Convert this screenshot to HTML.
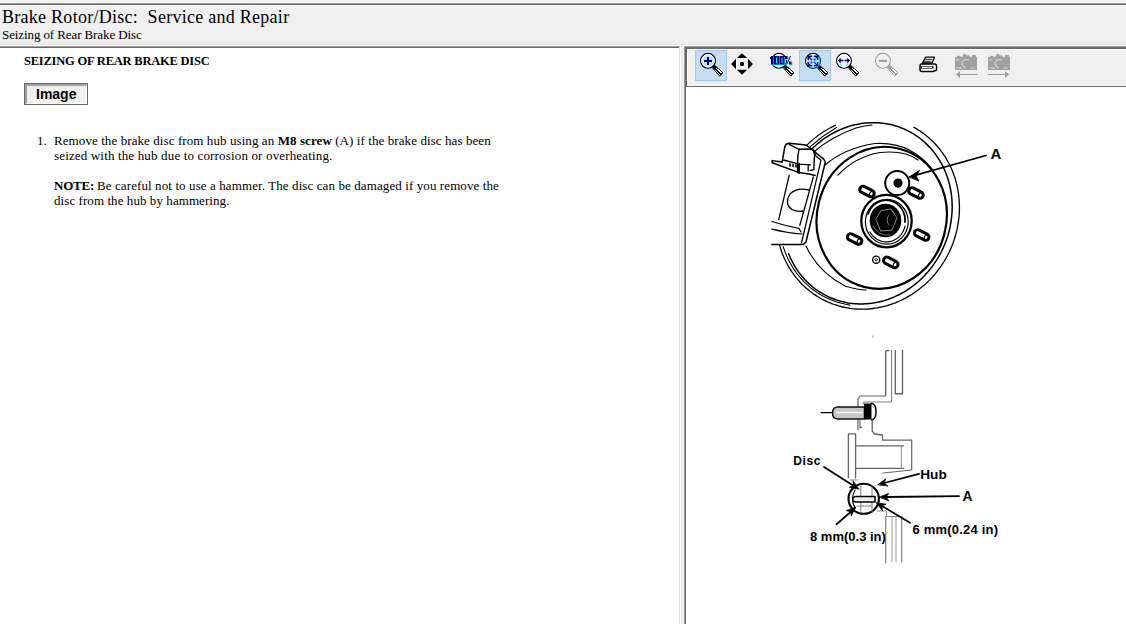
<!DOCTYPE html>
<html><head><meta charset="utf-8">
<style>
html,body{margin:0;padding:0;width:1126px;height:624px;overflow:hidden;background:#f0f0f0;}
.abs{position:absolute;}
.serif{font-family:"Liberation Serif",serif;color:#000;}
.sans{font-family:"Liberation Sans",sans-serif;color:#000;}
#title{left:2px;top:6.5px;font-size:18px;line-height:20px;white-space:nowrap;letter-spacing:0.27px;}
#sub{left:2px;top:27px;font-size:13px;line-height:15px;white-space:nowrap;letter-spacing:-0.1px;}
#h1{left:24px;top:54px;letter-spacing:-0.22px;font-size:12.5px;font-weight:bold;line-height:15px;white-space:nowrap;}
#btn{left:24px;top:83px;width:62px;height:20px;border:1px solid #696969;background:#f0f0f0;}
#btn .in{position:absolute;left:0;top:0;width:59px;height:17px;border-top:2px solid #a0a0a0;border-left:2px solid #a0a0a0;border-right:1px solid #fff;border-bottom:1px solid #fff;box-sizing:content-box;}
#btntxt{left:36px;top:87px;font-size:14px;font-weight:bold;line-height:15px;}
.ln{font-size:13px;line-height:15px;white-space:nowrap;}
</style></head><body>
<!-- header frame -->
<div class="abs" style="left:0;top:2px;width:1126px;height:1px;background:#f8f8f8"></div>
<div class="abs" style="left:0;top:3px;width:1126px;height:1px;background:#a0a0a0"></div>
<div class="abs" style="left:0;top:4px;width:1126px;height:1px;background:#696969"></div>
<div class="abs" style="left:0;top:5px;width:1126px;height:1px;background:#f8f8f8"></div>
<div class="abs" style="left:0;top:44px;width:1126px;height:1px;background:#e3e3e3"></div>
<div class="abs" style="left:0;top:45px;width:1126px;height:1px;background:#fff"></div>
<div id="title" class="abs serif">Brake Rotor/Disc:&nbsp; Service and Repair</div>
<div id="sub" class="abs serif">Seizing of Rear Brake Disc</div>

<!-- left pane -->
<div class="abs" style="left:0;top:46px;width:680px;height:1px;background:#a0a0a0"></div>
<div class="abs" style="left:0;top:47px;width:679px;height:1px;background:#696969"></div>
<div class="abs" style="left:680px;top:46px;width:1px;height:578px;background:#fff"></div>
<div class="abs" style="left:679px;top:47px;width:1px;height:577px;background:#e3e3e3"></div>
<div class="abs" style="left:0;top:48px;width:679px;height:576px;background:#fff"></div>

<!-- right pane -->
<div class="abs" style="left:684px;top:46px;width:442px;height:1px;background:#a0a0a0"></div>
<div class="abs" style="left:684px;top:46px;width:1px;height:578px;background:#a0a0a0"></div>
<div class="abs" style="left:685px;top:47px;width:441px;height:1px;background:#696969"></div>
<div class="abs" style="left:685px;top:47px;width:1px;height:577px;background:#696969"></div>
<div class="abs" style="left:686px;top:48px;width:440px;height:576px;background:#fff"></div>
<!-- toolbar -->
<div class="abs" style="left:686px;top:48px;width:440px;height:39px;background:#f0f0f0"></div>
<div class="abs" style="left:686px;top:48px;width:440px;height:1px;background:#696969"></div>
<div class="abs" style="left:686px;top:48px;width:1px;height:39px;background:#696969"></div>
<div class="abs" style="left:687px;top:49px;width:439px;height:1px;background:#fff"></div>
<div class="abs" style="left:687px;top:49px;width:1px;height:36px;background:#fff"></div>
<div class="abs" style="left:687px;top:85px;width:439px;height:1px;background:#f8f8f8"></div>
<div class="abs" style="left:686px;top:86px;width:440px;height:1px;background:#696969"></div>
<!-- hot buttons -->
<div class="abs" style="left:695px;top:50px;width:30px;height:29px;border:1px solid #99ccf5;background:#c5ddf2"></div>
<div class="abs" style="left:799px;top:50px;width:30px;height:29px;border:1px solid #99ccf5;background:#c5ddf2"></div>

<!-- left content -->
<div id="h1" class="abs serif">SEIZING OF REAR BRAKE DISC</div>
<div id="btn" class="abs"><div class="in"></div></div>
<div id="btntxt" class="abs sans">Image</div>
<div class="abs serif ln" style="left:37px;top:133px">1.</div>
<div class="abs serif ln" style="left:54px;top:133px;letter-spacing:0.085px">Remove the brake disc from hub using an <b>M8 screw</b> (A) if the brake disc has been</div>
<div class="abs serif ln" style="left:54px;top:148px;letter-spacing:0.155px">seized with the hub due to corrosion or overheating.</div>
<div class="abs serif ln" style="left:54px;top:178px;letter-spacing:-0.2px"><b>NOTE:</b></div>
<div class="abs serif ln" id="l3b" style="left:97px;top:178px;letter-spacing:0.1px">Be careful not to use a hammer. The disc can be damaged if you remove the</div>
<div class="abs serif ln" style="left:54px;top:193px;letter-spacing:0.07px">disc from the hub by hammering.</div>

<!--DIAGRAM-->
<svg class="abs" style="left:0;top:0" width="1126" height="624" viewBox="0 0 1126 624" fill="none" stroke="#000" stroke-linecap="round" stroke-linejoin="round">
<path d="M913.8 127.3 L915.8 128.4 L917.7 129.6 L919.7 130.8 L921.5 132.1 L923.4 133.4 L925.2 134.8 L927.0 136.2 L928.7 137.7 L930.4 139.2 L932.1 140.8 L933.7 142.4 L935.3 144.0 L936.8 145.7 L938.3 147.5 L939.7 149.2 L941.1 151.1 L942.5 152.9 L943.8 154.8 L945.1 156.7 L946.3 158.7 L947.4 160.7 L948.5 162.8 L949.6 164.8 L950.6 166.9 L951.6 169.1 L952.5 171.2 L953.3 173.4 L954.1 175.6 L954.9 177.8 L955.6 180.1 L956.2 182.4 L956.8 184.7 L957.3 187.0 L957.8 189.3 L958.2 191.6 L958.5 194.0 L958.8 196.4 L959.0 198.7 L959.2 201.1 L959.3 203.5 L959.4 205.9 L959.4 208.3 L959.4 210.7 L959.3 213.1 L959.1 215.6 L958.9 218.0 L958.6 220.4 L958.2 222.8 L957.8 225.2 L957.4 227.6 L956.9 229.9 L956.3 232.3 L955.7 234.7 L955.0 237.0 L954.3 239.3 L953.5 241.6 L952.7 243.9 L951.8 246.2 L950.8 248.5 L949.8 250.7 L948.8 252.9 L947.7 255.1 L946.5 257.2 L945.3 259.4 L944.1 261.5 L942.8 263.5 L941.4 265.6 L940.0 267.6 L938.6 269.5 L937.1 271.5 L935.6 273.4 L934.0 275.2 L932.4 277.0 L930.7 278.8 L929.0 280.6 L927.3 282.2 L925.5 283.9 L923.7 285.5 L921.9 287.1 L920.0 288.6 L918.1 290.0 L916.2 291.5 L914.2 292.8 L912.2 294.2 L910.2 295.4 L908.1 296.6 L906.1 297.8 L904.0 298.9 L901.8 300.0 L899.7 301.0 L897.5 301.9 L895.3 302.8 L893.1 303.6 L890.9 304.4 L888.7 305.1 L886.4 305.8 L884.2 306.4 L881.9 306.9 L879.6 307.4 L877.3 307.9 L875.0 308.2 L872.8 308.5 L870.5 308.8 L868.2 309.0 L865.8 309.1 L863.5 309.2 L861.3 309.2 L859.0 309.1 L856.7 309.0 L854.4 308.8 L852.1 308.6 L849.9 308.3 L847.6 307.9 L845.4 307.5 L843.1 307.0 L840.9 306.5 L838.7 305.9 L836.6 305.2 L834.4 304.5 L832.3 303.8 L830.2 302.9 L828.1 302.1 L826.0 301.1 L824.0 300.1 L822.0 299.1 L820.0 298.0 L818.0 296.8 L816.1 295.6 L814.2 294.4 L812.4 293.0 L810.6 291.7 L808.8 290.3 L807.0 288.8 L805.3 287.3 L803.7 285.8 L802.0 284.2 L800.4 282.5 L798.9 280.8 L797.4 279.1 L795.9 277.3 L794.5 275.5 L793.2 273.7 L791.9 271.8 L790.6 269.8 L789.4 267.9 L788.2 265.9 L787.1 263.8 L786.0 261.8 L785.0 259.7 L784.0 257.6 L783.1 255.4 L782.2 253.2 L781.4 251.0 L780.7 248.8 L780.0 246.6 L779.3 244.3 L778.7 242.0 L778.2 239.7 L777.7 237.4 L777.3 235.0" stroke-width="1.3" />
<path d="M807.4 144.6 L809.2 142.9 L811.0 141.2 L812.9 139.6 L814.8 138.1 L816.7 136.6 L818.7 135.1 L820.7 133.7 L822.7 132.3 L824.8 131.0 L826.9 129.8 L829.0 128.6 L831.1 127.4 L833.3 126.4 L835.5 125.3" stroke-width="1.2" />
<path d="M810 146.8 Q822 136 836.5 127.5" stroke-width="1.1" />
<path d="M796.9 168.0 L798.1 166.0 L799.4 164.1 L800.7 162.2 L802.0 160.3 L803.4 158.5 L804.8 156.7 L806.3 154.9 L807.8 153.2 L809.4 151.5 L810.9 149.9 L812.6 148.3 L814.2 146.7 L815.9 145.2 L817.6 143.7 L819.4 142.3 L821.1 140.9 L822.9 139.5 L824.8 138.2 L826.6 137.0 L828.5 135.8 L830.4 134.6 L832.4 133.5 L834.3 132.5 L836.3 131.5 L838.3 130.5 L840.3 129.6 L842.3 128.8 L844.4 128.0 L846.5 127.2 L848.5 126.5 L850.6 125.9 L852.7 125.3 L854.8 124.8 L856.9 124.4 L859.1 123.9 L861.2 123.6 L863.3 123.3 L865.4 123.1 L867.6 122.9 L869.7 122.7 L871.8 122.7 L874.0 122.7 L876.1 122.7 L878.2 122.8 L880.3 123.0 L882.4 123.2 L884.5 123.5 L886.6 123.8 L888.7 124.2 L890.7 124.6 L892.8 125.1 L894.8 125.7 L896.8 126.3 L898.8 126.9 L900.8 127.7 L902.7 128.4 L904.6 129.3 L906.5 130.1 L908.4 131.1 L910.3 132.1 L912.1 133.1 L913.9 134.2 L915.7 135.3 L917.4 136.5 L919.1 137.7 L920.8 139.0 L922.4 140.3 L924.0 141.7 L925.6 143.1 L927.1 144.6 L928.6 146.1 L930.1 147.6 L931.5 149.2 L932.9 150.9 L934.2 152.5 L935.5 154.2 L936.7 156.0 L937.9 157.8 L939.1 159.6 L940.2 161.4 L941.3 163.3 L942.3 165.2 L943.3 167.2 L944.2 169.1 L945.1 171.1 L945.9 173.2 L946.7 175.2 L947.4 177.3 L948.1 179.4 L948.7 181.5 L949.3 183.6 L949.8 185.8 L950.3 188.0 L950.7 190.2 L951.1 192.4 L951.4 194.6 L951.7 196.8 L951.9 199.1 L952.0 201.3 L952.1 203.6 L952.2 205.8 L952.2 208.1 L952.1 210.4 L952.0 212.7 L951.8 214.9 L951.6 217.2 L951.3 219.5 L951.0 221.8 L950.6 224.0 L950.2 226.3 L949.7 228.5 L949.2 230.8 L948.6 233.0 L948.0 235.2 L947.3 237.4 L946.5 239.6 L945.7 241.8 L944.9 243.9 L944.0 246.0 L943.1 248.1 L942.1 250.2 L941.1 252.3 L940.0 254.3 L938.9 256.4 L937.7 258.3 L936.5 260.3 L935.2 262.2 L933.9 264.1 L932.6 266.0 L931.2 267.8 L929.8 269.6 L928.3 271.4 L926.8 273.1 L925.3 274.8 L923.7 276.5 L922.1 278.1 L920.4 279.7 L918.8 281.2 L917.1 282.7 L915.3 284.1 L913.5 285.5 L911.7 286.9 L909.9 288.2 L908.0 289.4 L906.2 290.6 L904.3 291.8 L902.3 292.9 L900.4 294.0 L898.4 295.0 L896.4 295.9 L894.4 296.9 L892.4 297.7 L890.3 298.5 L888.3 299.3 L886.2 300.0 L884.1 300.6 L882.0 301.2 L879.9 301.7 L877.8 302.2 L875.7 302.6 L873.5 303.0 L871.4 303.3 L869.3 303.5 L867.1 303.7 L865.0 303.8 L862.9 303.9 L860.8 303.9 L858.6 303.9 L856.5 303.8 L854.4 303.7 L852.3 303.4 L850.2 303.2 L848.1 302.9 L846.0 302.5 L844.0 302.0 L841.9 301.6 L839.9 301.0 L837.9 300.4 L835.9 299.8 L833.9 299.0 L832.0 298.3 L830.0 297.5 L828.1 296.6 L826.3 295.7 L824.4 294.7 L822.6 293.7 L820.8 292.6 L819.0 291.5 L817.3 290.3 L815.5 289.1 L813.9 287.8 L812.2 286.5 L810.6 285.1 L809.0 283.7 L807.5 282.2 L806.0 280.7 L804.5 279.2 L803.1 277.6 L801.7 276.0 L800.4 274.3 L799.1 272.6 L797.9 270.9 L796.6 269.1 L795.5 267.3 L794.4 265.5 L793.3 263.6 L792.3 261.7 L791.3 259.7 L790.3 257.8 L789.5 255.8 L788.6 253.7" stroke-width="1.5" />
<path d="M815 151 Q832 136.5 856 128 Q865 125.5 872 125" stroke-width="1.1" />
<path d="M783.2 246.6 L783.9 248.8 L784.7 250.9 L785.5 253.0 L786.4 255.2 L787.3 257.2 L788.2 259.3 L789.3 261.3 L790.3 263.3 L791.5 265.3 L792.6 267.2 L793.8 269.1 L795.1 270.9 L796.4 272.8 L797.8 274.5 L799.2 276.3 L800.6 278.0 L802.1 279.6 L803.6 281.3 L805.2 282.8 L806.8 284.4 L808.5 285.8 L810.2 287.3 L811.9 288.7 L813.6 290.0 L815.4 291.3 L817.3 292.6 L819.1 293.7 L821.0 294.9 L822.9 296.0 L824.9 297.0 L826.9 298.0 L828.9 298.9 L830.9 299.8 L833.0 300.6 L835.0 301.4 L837.1 302.1 L839.2 302.7 L841.4 303.3 L843.5 303.8 L845.7 304.3 L847.9 304.7 L850.0 305.1" stroke-width="1.1" />
<ellipse cx="881.7" cy="217.8" rx="71.3" ry="64.7" transform="rotate(-75.6 881.7 217.8)" stroke-width="2.2" />
<path d="M825 165 Q845 148 875 143.5 Q910 141 933 170" stroke-width="1.2" />
<path d="M838 175 Q855 157 880 152.5 Q905 150 918 160" stroke-width="1.2" />
<path d="M806 246 Q818 272 845 286 Q858 290 866 290" stroke-width="1.1" />
<path d="M772.2 160.6 L782.1 162 L784.9 146.5 Q786 143.5 789.2 143.3 L806.1 145.1 L813.1 150 L817.4 154.2 L823.7 159.2 Q825.5 161 825.1 163 L806 243 L803 244.6 L771.9 244.6 Z" fill="#fff" stroke="none"/>
<path d="M782.1 162 L784.9 146.5 Q786 143.5 789.2 143.3 L806.1 145.1 L813.1 150 L817.4 154.2 L823.7 159.2 Q825.5 161 825.1 163 L806 242 L803 244.6 L771.9 244.6" stroke-width="1.5" />
<path d="M813.1 150 L816 156.3 L821 160.2 L801.5 243" stroke-width="1.2" />
<path d="M789.2 144.3 L799 149.3 L811 149 Q814.5 150 814.5 155.6 L813.8 169.7 L810.3 170.4" stroke-width="1.4" />
<path d="M799 149.3 Q797.5 156 797.6 162.7 L797.6 172.6" stroke-width="1.4" />
<path d="M772.2 160.6 L772.2 162.7 L799 172.6 L808.9 174 L815.2 175.4" stroke-width="1.5" />
<path d="M772.2 160.6 L782.1 162" stroke-width="1.4" />
<path d="M783.5 160 L799 164.1 L810.3 164.8 L808.2 165.5 L808.2 171.1" stroke-width="1.3" />
<path d="M789 163 L799 165 L799 168 L789 166.5 Z" fill="#000" stroke="none" opacity="0.75"/>
<path d="M791.5 163.5 v3 M794.5 164 v3" stroke-width="0.8" stroke="#fff"/>
<path d="M799 164 L799 173" stroke-width="2.0" />
<path d="M789.2 175.4 L778.7 219.6" stroke-width="1.3" />
<path d="M813.3 177 L799.8 225.4" stroke-width="1.3" />
<path d="M809 190 Q797 187 790 194 Q784 204 792 209.5 Q797 212 803 211" stroke-width="1.3" />
<path d="M771.9 221.5 Q786 226 798.8 228.3 L801 232" stroke-width="1.2" />
<path d="M771.9 229.2 Q786 233 802 234" stroke-width="1.2" />
<ellipse cx="886.5" cy="221.1" rx="25.2" ry="26.2" stroke-width="2.3"/>
<ellipse cx="886.8" cy="221.8" rx="21.4" ry="22.4" stroke-width="1.2"/>
<path d="M868 214 A19 20 0 0 1 905 222" stroke-width="1.8"/>
<path d="M905 226 A19 20 0 0 1 870 232" stroke-width="1.2"/>
<ellipse cx="885.5" cy="220.5" rx="15.8" ry="16.8" fill="#000" stroke="none"/>
<path d="M876 219 L881 210.5 L891 209 L897 218 L892 230 L881 231 Z" stroke="#999" stroke-width="0.9"/><path d="M873 226 Q878 236 890 235" stroke="#777" stroke-width="0.9"/>
<path d="M889 215 Q885 220 889 225" stroke="#999" stroke-width="0.8"/>
<g transform="rotate(27 867 191.5)"><rect x="859.25" y="188.2" width="15.5" height="6.6" rx="3.3" fill="#fff" stroke-width="3"/><path d="M871.25 188.7 Q869.25 191.5 871.25 194.3" stroke-width="1.2"/></g>
<g transform="rotate(27 916 193)"><rect x="908.25" y="189.7" width="15.5" height="6.6" rx="3.3" fill="#fff" stroke-width="3"/><path d="M920.25 190.2 Q918.25 193 920.25 195.8" stroke-width="1.2"/></g>
<g transform="rotate(27 921.7 235)"><rect x="913.95" y="231.7" width="15.5" height="6.6" rx="3.3" fill="#fff" stroke-width="3"/><path d="M925.95 232.2 Q923.95 235 925.95 237.8" stroke-width="1.2"/></g>
<g transform="rotate(27 854.6 239)"><rect x="846.85" y="235.7" width="15.5" height="6.6" rx="3.3" fill="#fff" stroke-width="3"/><path d="M858.85 236.2 Q856.85 239 858.85 241.8" stroke-width="1.2"/></g>
<g transform="rotate(27 890.8 262.4)"><rect x="883.05" y="259.09999999999997" width="15.5" height="6.6" rx="3.3" fill="#fff" stroke-width="3"/><path d="M895.05 259.59999999999997 Q893.05 262.4 895.05 265.2" stroke-width="1.2"/></g>
<circle cx="876.2" cy="259.7" r="3.6" stroke-width="1.4"/>
<circle cx="876.2" cy="259.7" r="1.2" stroke-width="0.8"/>
<circle cx="897.2" cy="183.1" r="12" fill="#fff" stroke-width="2"/>
<circle cx="898" cy="183.1" r="4.6" fill="#000" stroke="none"/>
<path d="M986 155.5 L913 175.8" stroke-width="1.8" />
<path d="M909.3 176.8 L919.5 170.5 L916 175.8 L918.8 180.8 Z" fill="#000" stroke="#000" stroke-width="0.9"/>
<text x="990.6" y="158.6" font-family="Liberation Sans" font-weight="bold" font-size="15" fill="#000" stroke="none">A</text>
<path d="M873 336 v1.5" stroke="#999" stroke-width="1"/>
<path d="M885.7 393.7 L885.7 351 L889 350.4" stroke="#666" stroke-width="1.4" />
<path d="M891.6 350.5 L891.6 401" stroke="#808080" stroke-width="1.1" />
<path d="M895.3 350.5 L895.3 393.7 L902.5 393.7 L902.5 350.5" stroke="#666" stroke-width="1.4" />
<path d="M885.7 393.7 L885.7 396 L860 396 L858 399 L858 430" stroke="#666" stroke-width="1.2" />
<path d="M891.6 401 L891 402 L864 402 L863 404" stroke="#808080" stroke-width="1.1" />
<path d="M821 412.6 L833 412.6" stroke="#000" stroke-width="1.3"/>
<path d="M838 407 L864.5 407 L864.5 419 L838 419 Q832.5 419 832.5 413 Q832.5 407 838 407 Z" fill="#c8c8c8" stroke="#111" stroke-width="1.5"/>
<path d="M837 412.5 L862 412.5" stroke="#fff" stroke-width="1.5"/>
<rect x="864" y="403.5" width="8" height="16" fill="#000" stroke="none"/>
<path d="M871.5 403.5 Q876 404 876 411.5 Q876 419.5 871.5 420" fill="#fff" stroke="#000" stroke-width="1.5"/>
<path d="M860 420 L860 428 L862 427" stroke="#666" stroke-width="1.1" />
<path d="M872.2 420 L872.2 431 L874.5 434 L882.5 435 L882.5 440.2 L911.7 440.2" stroke="#666" stroke-width="1.3" />
<path d="M848.4 477.9 L848.4 433.8 L855.6 433.8 L855.6 477.9" stroke="#666" stroke-width="1.3" />
<path d="M855.6 445.8 L903.7 445.8 M855.6 468.3 L903.7 468.3" stroke="#666" stroke-width="1.3" />
<path d="M901.3 445.8 L901.3 468.3" stroke="#8a8a8a" stroke-width="1.0" />
<path d="M911.7 440.2 L911.7 470 L883 473" stroke="#666" stroke-width="1.2" />
<path d="M850 480 L858 480" stroke="#8a8a8a" stroke-width="1.0" />
<ellipse cx="863.7" cy="498.8" rx="15.2" ry="15" stroke="#000" stroke-width="2.1" fill="#fff"/>
<path d="M860.8 485 L860.8 513 M872 485 L872 512" stroke="#808080" stroke-width="1.0" />
<path d="M856 496.4 L875 496.4 L875 502 L856 502 Q852.8 502 852.8 499.2 Q852.8 496.4 856 496.4 Z" stroke="#000" stroke-width="1.5" fill="#eee"/>
<path d="M857 506 L872 506" stroke="#808080" stroke-width="1.0" />
<path d="M855 490 Q850 499 855 508" stroke="#000" stroke-width="1.2" />
<path d="M885.7 516.5 L885.7 563" stroke="#808080" stroke-width="1.2" />
<path d="M892 516.5 L892 562" stroke="#999" stroke-width="1.0" />
<path d="M896 516.5 L896 562" stroke="#999" stroke-width="1.0" />
<path d="M901.7 516.5 L901.7 562" stroke="#808080" stroke-width="1.2" />
<path d="M877 511 L886.5 511 L886.5 516.5 L901.7 516.5" stroke="#8a8a8a" stroke-width="1.0" />
<path d="M824.0 467.0 L853.5 485.7" stroke="#000" stroke-width="1.8"/><path d="M858.8 489.1 L849.3 487.3 L853.5 485.7 L853.1 481.2 Z" fill="#000" stroke="#000" stroke-width="0.8"/>
<path d="M919.0 473.8 L884.1 483.0" stroke="#000" stroke-width="1.8"/><path d="M878.0 484.6 L885.8 478.8 L884.1 483.0 L887.6 485.8 Z" fill="#000" stroke="#000" stroke-width="0.8"/>
<path d="M959.0 496.1 L886.0 497.0" stroke="#000" stroke-width="1.8"/><path d="M879.7 497.1 L888.7 493.4 L886.0 497.0 L888.7 500.6 Z" fill="#000" stroke="#000" stroke-width="0.8"/>
<path d="M836.4 524.4 L850.9 511.7" stroke="#000" stroke-width="1.8"/><path d="M855.6 507.5 L851.2 516.1 L850.9 511.7 L846.5 510.7 Z" fill="#000" stroke="#000" stroke-width="0.8"/>
<path d="M910.0 522.8 L881.9 505.9" stroke="#000" stroke-width="1.8"/><path d="M876.5 502.7 L886.1 504.2 L881.9 505.9 L882.4 510.4 Z" fill="#000" stroke="#000" stroke-width="0.8"/>
<text x="793.3" y="464.5" font-size="12" letter-spacing="0.6" font-family="Liberation Sans" font-weight="bold" fill="#000" stroke="none">Disc</text>
<text x="920.3" y="478.5" font-size="13.6" font-family="Liberation Sans" font-weight="bold" fill="#000" stroke="none">Hub</text>
<text x="962.6" y="500.6" font-size="13.8" font-family="Liberation Sans" font-weight="bold" fill="#000" stroke="none">A</text>
<text x="810" y="541.2" font-size="13" font-family="Liberation Sans" font-weight="bold" fill="#000" stroke="none">8 mm(0.3 in)</text>
<text x="912.5" y="533.6" font-size="13" letter-spacing="0.2" font-family="Liberation Sans" font-weight="bold" fill="#000" stroke="none">6 mm(0.24 in)</text>
<circle cx="708" cy="60.8" r="7.4" stroke="#000" stroke-width="1.2"/><circle cx="708" cy="60.8" r="6.3" stroke="#fff" stroke-width="1"/><path d="M712.2 67.0 L714.2 65.0 L723 72.8 L720 75.8 Z" fill="#000" stroke="#000" stroke-width="1" stroke-linejoin="miter"/><path d="M716.5 68.3 L721.5 72.8 M715 70.3 L719.5 74.3" stroke="#fff" stroke-width="1" shape-rendering="crispEdges"/>
<rect x="704" y="60" width="8" height="2" fill="#000080" stroke="none"/><rect x="707" y="57" width="2" height="8" fill="#000080" stroke="none"/>
<path d="M742 52 L754 64 L742 76 L730 64 Z" fill="#fff" stroke="none"/>
<path d="M742 53.2 L747.2 58 L736.8 58 Z M742 74.8 L747.2 69.8 L736.8 69.8 Z M731 64 L736 58.8 L736 69.2 Z M753 64 L748 58.8 L748 69.2 Z" fill="#000" stroke="none"/>
<rect x="737.2" y="59.2" width="9.6" height="9.6" fill="#f0f0f0" stroke="none"/>
<circle cx="742" cy="64" r="3.2" fill="#fff" stroke="none"/><circle cx="742" cy="64" r="2.2" fill="#000" stroke="none"/>
<circle cx="779" cy="60.8" r="7.4" stroke="#000" stroke-width="1.2"/><circle cx="779" cy="60.8" r="6.3" stroke="#fff" stroke-width="1"/><path d="M783.2 67.0 L785.2 65.0 L794 72.8 L791 75.8 Z" fill="#000" stroke="#000" stroke-width="1" stroke-linejoin="miter"/><path d="M787.5 68.3 L792.5 72.8 M786 70.3 L790.5 74.3" stroke="#fff" stroke-width="1" shape-rendering="crispEdges"/>
<g fill="#00ffff" stroke="none" transform="translate(1,1)"><rect x="771" y="56" width="2.5" height="8.5"/><rect x="770" y="57" width="1.5" height="2"/><rect x="774" y="56" width="5" height="8.5"/><rect x="779.5" y="56" width="5" height="8.5"/><rect x="785" y="56" width="2.5" height="3"/><rect x="789" y="61.5" width="2.5" height="3"/></g>
<g fill="#000080" stroke="none"><rect x="771" y="56" width="2.5" height="8.5"/><rect x="770" y="57" width="1.5" height="2"/><rect x="774" y="56" width="5" height="8.5"/><rect x="779.5" y="56" width="5" height="8.5"/><rect x="785" y="56" width="2.5" height="3"/><rect x="789" y="61.5" width="2.5" height="3"/><path d="M790 56 L791 56 L787 64.5 L786 64.5 Z"/></g>
<rect x="776" y="57.5" width="1" height="5.5" fill="#00ffff" stroke="none"/><rect x="781.5" y="57.5" width="1" height="5.5" fill="#00ffff" stroke="none"/>
<circle cx="813" cy="60.8" r="7.4" stroke="#000" stroke-width="1.2"/><circle cx="813" cy="60.8" r="6.3" stroke="#fff" stroke-width="1"/><path d="M817.2 67.0 L819.2 65.0 L828 72.8 L825 75.8 Z" fill="#000" stroke="#000" stroke-width="1" stroke-linejoin="miter"/><path d="M821.5 68.3 L826.5 72.8 M820 70.3 L824.5 74.3" stroke="#fff" stroke-width="1" shape-rendering="crispEdges"/>
<path d="M808.2 59.5 V56.2 H811.5 M814.5 56.2 H817.8 V59.5 M817.8 62.5 V65.8 H814.5 M811.5 65.8 H808.2 V62.5" stroke="#000080" stroke-width="1.5" stroke-linejoin="miter"/>
<path d="M809 57 L811.8 59.8 M817 57 L814.2 59.8 M809 65 L811.8 62.2 M817 65 L814.2 62.2" stroke="#000080" stroke-width="1.2"/>
<path d="M810 60.5 L812 62.2 M816 60.5 L814 62.2 M809.5 63.5 h1.2 M815.3 58.5 h1.2 M819 57 v9 M810 67 h8" stroke="#00e8ff" stroke-width="1"/>
<circle cx="844" cy="60.8" r="7.4" stroke="#000" stroke-width="1.2"/><circle cx="844" cy="60.8" r="6.3" stroke="#fff" stroke-width="1"/><path d="M848.2 67.0 L850.2 65.0 L859 72.8 L856 75.8 Z" fill="#000" stroke="#000" stroke-width="1" stroke-linejoin="miter"/><path d="M852.5 68.3 L857.5 72.8 M851 70.3 L855.5 74.3" stroke="#fff" stroke-width="1" shape-rendering="crispEdges"/>
<path d="M837.8 60.5 L840.8 57.8 L840.8 63.2 Z M850.2 60.5 L847.2 57.8 L847.2 63.2 Z" fill="#000080" stroke="none"/><path d="M840 60.5 h2.8 M845.2 60.5 h2.8" stroke="#000080" stroke-width="1.7"/>
<path d="M840.5 64 l1 1.5 M847.5 64 l-1 1.5" stroke="#00ffff" stroke-width="1"/>
<circle cx="883" cy="60.8" r="7.4" stroke="#a0a0a0" stroke-width="1.2"/><circle cx="883" cy="60.8" r="6.3" stroke="#f0f0f0" stroke-width="1"/><path d="M887.2 67.0 L889.2 65.0 L898 72.8 L895 75.8 Z" fill="#a0a0a0" stroke="#a0a0a0" stroke-width="1" stroke-linejoin="miter"/><path d="M891.5 68.3 L896.5 72.8 M890 70.3 L894.5 74.3" stroke="#fff" stroke-width="1" shape-rendering="crispEdges"/>
<rect x="879" y="59.8" width="8" height="2.2" fill="#a0a0a0" stroke="none"/>
<path d="M925.5 57.2 L934.5 57.2 L932 63 L922.5 63 Z" fill="#fff" stroke="#000" stroke-width="1.3"/>
<path d="M921 64 L934.5 64 Q936.5 64 936.5 66 L936.5 70 L933 71.5 L921.5 71.5 Q920 71.5 920 70 L920 66 Q920 64 921 64 Z" fill="#fff" stroke="#000" stroke-width="1.4"/>
<rect x="920.5" y="66.2" width="13" height="2.4" fill="#000" stroke="none"/><rect x="922" y="66.8" width="10" height="1.2" fill="#fff" stroke="none"/><rect x="927" y="66.8" width="3" height="1.2" fill="#e0d000" stroke="none"/>
<path d="M925.5 59.3 h6.5 M924.5 61.3 h6" stroke="#000" stroke-width="0.9"/>
<rect x="955" y="57" width="22" height="13" fill="#a0a0a0" stroke="none"/><rect x="957" y="55.8" width="3.5" height="1.4" fill="#a0a0a0" stroke="none"/><path d="M962 57 L963.5 54.5 L965 53.5 L967 55.5 L969 55 L970 57 Z" fill="#a0a0a0" stroke="none"/><rect x="972" y="55" width="4" height="2.2" fill="#a0a0a0" stroke="none"/><path d="M968.5 60 Q963.5 58.5 962 63 Q963 67.5 965.5 67.5" stroke="#f0f0f0" stroke-width="0.9" stroke-dasharray="1.2 0.8"/><path d="M956.5 60 h2.5 M956.5 68 h5 M971 68 h4" stroke="#f0f0f0" stroke-width="0.8" stroke-dasharray="1 1"/><path d="M958 74.5 h19" stroke="#a0a0a0" stroke-width="1.2"/><path d="M960 71 L956 74.5 L960 78 Z" fill="#a0a0a0" stroke="none"/>
<rect x="988" y="57" width="22" height="13" fill="#a0a0a0" stroke="none"/><rect x="990" y="55.8" width="3.5" height="1.4" fill="#a0a0a0" stroke="none"/><path d="M995 57 L996.5 54.5 L998 53.5 L1000 55.5 L1002 55 L1003 57 Z" fill="#a0a0a0" stroke="none"/><rect x="1005" y="55" width="4" height="2.2" fill="#a0a0a0" stroke="none"/><path d="M1001.5 60 Q996.5 58.5 995 63 Q996 67.5 998.5 67.5" stroke="#f0f0f0" stroke-width="0.9" stroke-dasharray="1.2 0.8"/><path d="M989.5 60 h2.5 M989.5 68 h5 M1004 68 h4" stroke="#f0f0f0" stroke-width="0.8" stroke-dasharray="1 1"/><path d="M988 74.5 h18" stroke="#a0a0a0" stroke-width="1.2"/><path d="M1005 71 L1009 74.5 L1005 78 Z" fill="#a0a0a0" stroke="none"/>
</svg>
<!--/DIAGRAM-->
</body></html>
